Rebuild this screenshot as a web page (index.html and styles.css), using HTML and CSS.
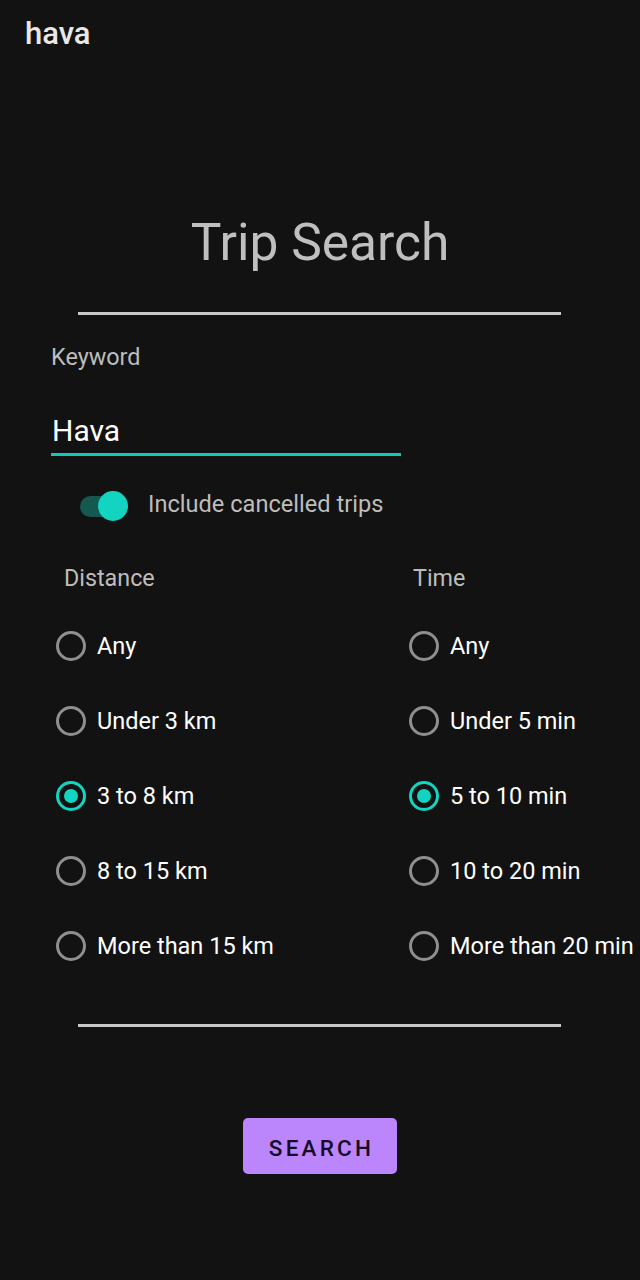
FILE: index.html
```html
<!DOCTYPE html>
<html lang="en">
<head>
<meta charset="utf-8">
<title>hava - Trip Search</title>
<link rel="stylesheet" href="styles.css">
</head>
<body>
<div class="screen">
  <header class="appbar">hava</header>
  <h1 class="title">Trip Search</h1>
  <div class="rule"></div>
  <div class="field">
    <div class="field-label">Keyword</div>
    <div class="field-input">Hava</div>
  </div>
  <div class="switch-row">
    <div class="switch"><div class="track"></div><div class="thumb"></div></div>
    <div class="switch-label">Include cancelled trips</div>
  </div>
  <div class="groups">
    <div class="group group-distance">
      <div class="group-label">Distance</div>
      <div class="radio"><span class="dot"></span><span class="radio-text">Any</span></div>
      <div class="radio"><span class="dot"></span><span class="radio-text">Under 3 km</span></div>
      <div class="radio checked"><span class="dot"></span><span class="radio-text">3 to 8 km</span></div>
      <div class="radio"><span class="dot"></span><span class="radio-text">8 to 15 km</span></div>
      <div class="radio"><span class="dot"></span><span class="radio-text">More than 15 km</span></div>
    </div>
    <div class="group group-time">
      <div class="group-label">Time</div>
      <div class="radio"><span class="dot"></span><span class="radio-text">Any</span></div>
      <div class="radio"><span class="dot"></span><span class="radio-text">Under 5 min</span></div>
      <div class="radio checked"><span class="dot"></span><span class="radio-text">5 to 10 min</span></div>
      <div class="radio"><span class="dot"></span><span class="radio-text">10 to 20 min</span></div>
      <div class="radio"><span class="dot"></span><span class="radio-text">More than 20 min</span></div>
    </div>
  </div>
  <div class="rule rule-bottom"></div>
  <div class="actions">
    <button class="btn">SEARCH</button>
  </div>
</div>
</body>
</html>
```
FILE: styles.css
```css
html, body {
  margin: 0;
  padding: 0;
  background: #121212;
}
body {
  font-family: Roboto, "Liberation Sans", sans-serif;
  color: #ffffff;
}
.screen {
  width: 640px;
  height: 1280px;
  overflow: hidden;
  display: flex;
  flex-direction: column;
}
.appbar {
  height: 66px;
  display: flex;
  align-items: center;
  padding-left: 25px;
  font-size: 31px;
  font-weight: 500;
  color: #e8e8e8;
}
.title {
  margin: 147px 0 0;
  height: 60px;
  line-height: 60px;
  text-align: center;
  font-size: 51.5px;
  font-weight: 400;
  color: #bfbfbf;
}
.rule {
  margin: 39px 0 0 78px;
  width: 483px;
  height: 3px;
  background: #c8c8c8;
}
.field {
  margin: 30px 0 0 51px;
  width: 350px;
}
.field-label {
  font-size: 23.4px;
  line-height: 24px;
  color: #bdbdbd;
}
.field-input {
  margin-top: 45px;
  font-size: 30px;
  line-height: 34px;
  color: #ffffff;
  padding-bottom: 5px;
  border-bottom: 3px solid #12c9b8;
  padding-left: 1px;
}
.switch-row {
  margin: 34px 0 0 80px;
  height: 32px;
  display: flex;
  align-items: center;
  gap: 20px;
}
.switch {
  position: relative;
  width: 48px;
  height: 32px;
}
.track {
  position: absolute;
  left: 0;
  right: 2px;
  top: 6px;
  height: 21px;
  border-radius: 11px;
  background: #14584f;
}
.thumb {
  position: absolute;
  right: 0;
  top: 1px;
  width: 30px;
  height: 30px;
  border-radius: 50%;
  background: #13d4c1;
}
.switch-label {
  font-size: 23.6px;
  line-height: 28px;
  margin-top: -4px;
  color: #bdbdbd;
}
.groups {
  margin-top: 43px;
  display: grid;
  grid-template-columns: 353px 1fr;
  padding-left: 56px;
}
.group-label {
  font-size: 23.3px;
  line-height: 26px;
  color: #bdbdbd;
  margin-bottom: 17px;
}
.group-distance .group-label { padding-left: 8px; }
.group-time .group-label { padding-left: 4px; }
.radio {
  height: 75px;
  display: flex;
  align-items: center;
  gap: 11px;
  white-space: nowrap;
}
.dot {
  flex: none;
  box-sizing: border-box;
  width: 30px;
  height: 30px;
  border-radius: 50%;
  border: 3px solid #8f8f8f;
  display: flex;
  align-items: center;
  justify-content: center;
}
.radio.checked .dot {
  border-color: #13d4c1;
}
.radio.checked .dot::after {
  content: "";
  width: 14px;
  height: 14px;
  border-radius: 50%;
  background: #13d4c1;
}
.radio-text {
  font-size: 23.5px;
  line-height: 28px;
  color: #ffffff;
}
.rule-bottom {
  margin-top: 41px;
}
.actions {
  margin-top: 91px;
  display: flex;
  justify-content: center;
}
.btn {
  width: 154px;
  height: 56px;
  border: none;
  border-radius: 5px;
  background: #bb86fc;
  color: #170a26;
  font-family: Roboto, "Liberation Sans", sans-serif;
  font-size: 22.5px;
  font-weight: 500;
  letter-spacing: 3.2px;
  padding: 3px 0 0 3px;
}
```
